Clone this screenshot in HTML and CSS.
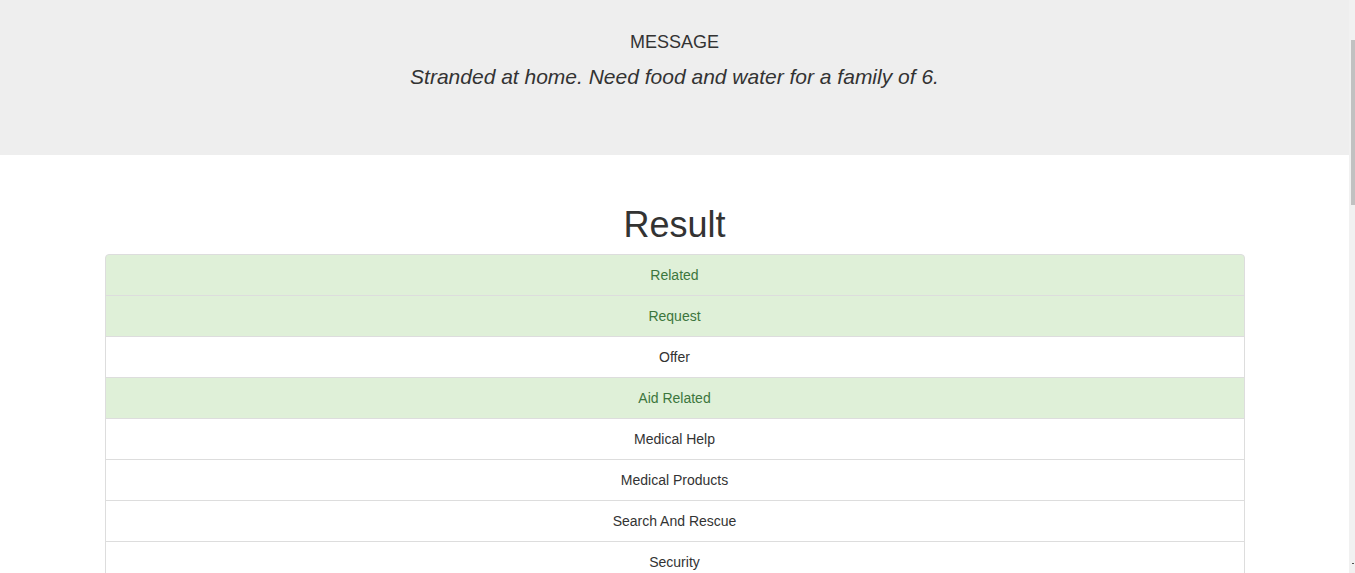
FILE: index.html
```html
<!DOCTYPE html>
<html lang="en">
<head>
<meta charset="utf-8">
<title>Disaster Response Project</title>
<link rel="stylesheet" href="styles.css">
</head>
<body>
<div class="page">
  <main class="content">
    <section class="jumbotron">
      <h4 class="msg-title">MESSAGE</h4>
      <p class="msg-text"><i>Stranded at home. Need food and water for a family of 6.</i></p>
    </section>
    <section class="container">
      <h1 class="result-title">Result</h1>
      <ul class="list-group">
        <li class="list-item success">Related</li>
        <li class="list-item success">Request</li>
        <li class="list-item">Offer</li>
        <li class="list-item success">Aid Related</li>
        <li class="list-item">Medical Help</li>
        <li class="list-item">Medical Products</li>
        <li class="list-item">Search And Rescue</li>
        <li class="list-item">Security</li>
      </ul>
    </section>
  </main>
  <div class="scrollbar"><div class="thumb"></div><div class="arrow"></div></div>
</div>
</body>
</html>
```
FILE: styles.css
```css
html, body {
  margin: 0;
  padding: 0;
  height: 100%;
  overflow: hidden;
}
body {
  font-family: "Liberation Sans", Arial, Helvetica, sans-serif;
  font-size: 14px;
  line-height: 1.42857;
  color: #333;
  background: #fff;
}
.page {
  display: flex;
  height: 100%;
}
.content {
  flex: 1;
  min-width: 0;
  overflow: hidden;
}
.jumbotron {
  background: #eee;
  height: 155px;
  box-sizing: border-box;
  padding-top: 33px;
  text-align: center;
}
.msg-title {
  margin: 0 0 9px;
  font-size: 18px;
  font-weight: 500;
  line-height: 1.1;
  color: #333;
}
.msg-text {
  margin: 0;
  font-size: 21px;
  line-height: 30px;
  font-weight: 200;
}
.container {
  width: 1140px;
  margin: 0 auto;
}
.result-title {
  margin: 50px 0 9px;
  font-size: 36px;
  font-weight: 500;
  line-height: 1.1;
  text-align: center;
}
.list-group {
  list-style: none;
  margin: 0;
  padding: 0;
}
.list-item {
  display: block;
  padding: 10px 15px;
  margin-bottom: -1px;
  border: 1px solid #ddd;
  background: #fff;
  text-align: center;
  line-height: 20px;
}
.list-item:first-child {
  border-top-left-radius: 4px;
  border-top-right-radius: 4px;
}
.list-item.success {
  background: #dff0d8;
  color: #3c763d;
}
.scrollbar {
  position: relative;
  width: 6px;
  flex: none;
  background: #f1f1f1;
}
.thumb {
  position: absolute;
  left: 2px;
  right: 0;
  top: 40px;
  height: 165px;
  background: #c1c1c1;
}
.arrow {
  position: absolute;
  left: 3px;
  width: 2px;
  height: 1px;
  top: 563px;
  background: #505050;
}
```
